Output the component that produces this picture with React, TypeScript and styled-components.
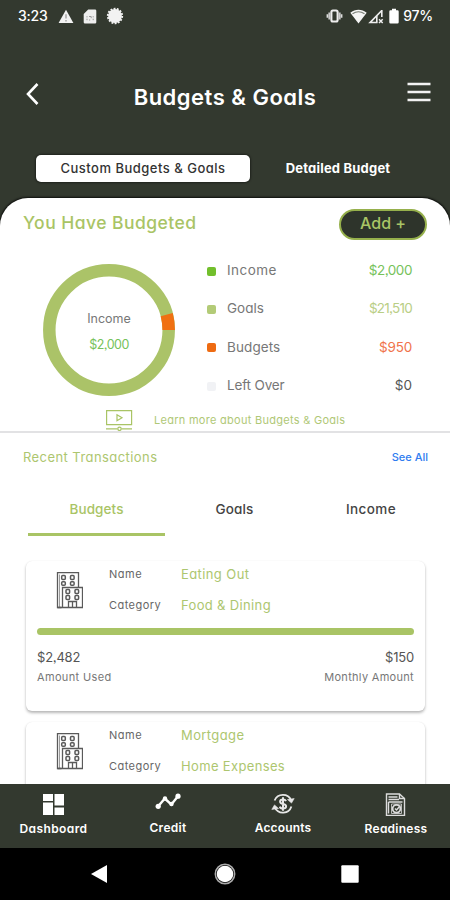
import React from "react";
import styled, { createGlobalStyle } from "styled-components";

const olive = "#33392f";
const green = "#a9c465";

const GlobalStyle = createGlobalStyle`
  * { box-sizing: border-box; }
  body {
    margin: 0;
    font-family: Inter, "Open Sans", sans-serif;
    font-feature-settings: "cv11", "ss03";
    background: #fff;
  }
  button { font: inherit; font-feature-settings: inherit; }
`;

const Screen = styled.div`
  width: 450px;
  height: 900px;
  display: flex;
  flex-direction: column;
  overflow: hidden;
  background: ${olive};
`;

const Text = styled.span<{
  $size: number;
  $color?: string;
  $weight?: number;
  $spacing?: number;
}>`
  font-size: ${(p) => p.$size}px;
  color: ${(p) => p.$color ?? "#666"};
  font-weight: ${(p) => p.$weight ?? 400};
  letter-spacing: ${(p) => p.$spacing ?? 0}px;
  line-height: 20px;
  white-space: nowrap;
`;

const StatusBar = styled.div`
  height: 32px;
  flex: none;
  display: flex;
  align-items: center;
  justify-content: space-between;
  padding: 0 17px 0 18px;
`;

const StatusGroup = styled.div<{ $gap: number }>`
  display: flex;
  align-items: center;
  gap: ${(p) => p.$gap}px;
`;

const TitleBar = styled.header`
  height: 123px;
  flex: none;
  display: grid;
  grid-template-columns: 40px 1fr 40px;
  align-items: center;
  padding: 0 19px 0 12px;
`;

const IconButton = styled.button<{ $end?: boolean }>`
  display: flex;
  justify-content: ${(p) => (p.$end ? "flex-end" : "center")};
  padding: 0;
  margin-top: ${(p) => (p.$end ? "-4px" : "0")};
  border: 0;
  background: none;
`;

const Title = styled.h1`
  margin: 7px 0 0;
  padding-left: 7px;
  text-align: center;
  font-size: 22px;
  line-height: 26px;
  font-weight: 600;
  letter-spacing: 0.5px;
  color: #fff;
  white-space: nowrap;
`;

const SegmentBar = styled.nav`
  flex: none;
  height: 43px;
  display: grid;
  grid-template-columns: 214px 176px;
  padding-left: 36px;
`;

const Segment = styled.button<{ $active?: boolean }>`
  height: 27px;
  padding: 0 0 2px;
  display: flex;
  align-items: center;
  justify-content: center;
  border: 0;
  border-radius: 5px;
  background: ${(p) => (p.$active ? "#fff" : "transparent")};
  box-shadow: ${(p) => (p.$active ? "0 0 2px 1px rgba(0, 0, 0, 0.4)" : "none")};
`;

const Panel = styled.main`
  flex: none;
  height: 586px;
  overflow: hidden;
  display: flex;
  flex-direction: column;
  background: #fff;
  border-radius: 28px 28px 0 0;
  box-shadow: 0 0 2px 1px rgba(0, 0, 0, 0.75);
`;

const Summary = styled.section`
  flex: none;
  height: 235px;
  border-bottom: 2px solid #e2e2e4;
`;

const SummaryHeader = styled.div`
  height: 54px;
  display: flex;
  align-items: center;
  justify-content: space-between;
  padding: 0 23px;
`;

const SummaryTitle = styled.div`
  padding-bottom: 4px;
`;

const AddButton = styled.button`
  width: 88px;
  height: 31px;
  margin-top: -1px;
  padding: 0 0 3px;
  display: flex;
  align-items: center;
  justify-content: center;
  border: 2px solid #96b04c;
  border-radius: 16px;
  background: #2e342b;
`;

const SummaryBody = styled.div`
  height: 156px;
  display: grid;
  grid-template-columns: 132px 205px;
  column-gap: 32px;
  padding-left: 43px;
`;

const Donut = styled.div`
  display: grid;
  width: 132px;
  height: 132px;
  margin-top: 12px;
  > * {
    grid-area: 1 / 1;
  }
`;

const DonutLabel = styled.div`
  display: flex;
  flex-direction: column;
  align-items: center;
  justify-content: center;
  gap: 6px;
  padding-top: 3px;
`;

const Legend = styled.ul`
  list-style: none;
  margin: -1px 0 0;
  padding: 0;
  display: grid;
  grid-template-rows: repeat(4, 38.3px);
`;

const LegendItem = styled.li`
  display: grid;
  grid-template-columns: 9px 1fr auto;
  column-gap: 11px;
  align-items: center;
`;

const Swatch = styled.i<{ $color: string }>`
  width: 9px;
  height: 9px;
  margin-top: 2px;
  border-radius: 2px;
  background: ${(p) => p.$color};
`;

const LearnMore = styled.div`
  height: 23px;
  display: flex;
  align-items: center;
  gap: 21px;
  padding-left: 105px;
`;

const RecentHeader = styled.div`
  flex: none;
  height: 49px;
  display: flex;
  align-items: center;
  justify-content: space-between;
  padding: 0 22px 1px 23px;
`;

const Tabs = styled.nav`
  flex: none;
  height: 54px;
  margin: 0 10px 0 28px;
  display: grid;
  grid-template-columns: 137px 139px 134px;
`;

const Tab = styled.button<{ $active?: boolean }>`
  padding: 2px 0 0;
  display: flex;
  align-items: center;
  justify-content: center;
  border: 0;
  border-bottom: 3px solid ${(p) => (p.$active ? green : "transparent")};
  background: none;
`;

const CardList = styled.div`
  padding: 25px 25px 0 26px;
  display: flex;
  flex-direction: column;
  gap: 11px;
`;

const Card = styled.article`
  flex: none;
  height: 150px;
  padding: 0 11px;
  border-radius: 6px;
  background: #fff;
  box-shadow: 0 2px 3px rgba(0, 0, 0, 0.28), 0 0 1px rgba(0, 0, 0, 0.1);
`;

const CardTop = styled.div`
  height: 67px;
  display: grid;
  grid-template-columns: 56px 72px 1fr;
  padding: 0 0 0 16px;
`;

const CardIcon = styled.div`
  padding-top: 10px;
  line-height: 0;
`;

const Column = styled.div<{ $end?: boolean; $gap: number; $top: number }>`
  display: flex;
  flex-direction: column;
  align-items: ${(p) => (p.$end ? "flex-end" : "flex-start")};
  gap: ${(p) => p.$gap}px;
  padding-top: ${(p) => p.$top}px;
`;

const Progress = styled.div`
  height: 7px;
  border-radius: 4px;
  background: ${green};
`;

const Amounts = styled.div`
  display: flex;
  justify-content: space-between;
`;

const BottomNav = styled.nav`
  flex: none;
  height: 64px;
  display: grid;
  grid-template-columns: 107px 122px 108px 118px;
  background: ${olive};
`;

const NavItem = styled.a<{ $lift?: number }>`
  display: flex;
  flex-direction: column;
  align-items: center;
  justify-content: space-between;
  padding: 8px 0 ${(p) => 9 + (p.$lift ?? 0)}px;
`;

const SystemNav = styled.div`
  flex: none;
  height: 52px;
  display: grid;
  grid-template-columns: 162px 90px 160px;
  padding-left: 18px;
  align-items: center;
  justify-items: center;
  background: #000;
`;

const WarningIcon = () => (
  <svg width="16" height="15" viewBox="0 0 16 15">
    <path d="M8 .8 15.4 14H.6Z" fill="#f2f2f2" />
    <path d="M8 5.3v4.2M8 11v1.6" stroke="#999" strokeWidth="1.3" />
  </svg>
);

const SimIcon = () => (
  <svg width="14" height="15" viewBox="0 0 14 15">
    <path d="M5.2.5H12a1.3 1.3 0 0 1 1.3 1.3v11.4a1.3 1.3 0 0 1-1.3 1.3H2a1.3 1.3 0 0 1-1.3-1.3V5Z" fill="#eee" />
    <path d="M4 7.2v1.2m0 1.3v1.5M10.2 7.2v1.2m0 1.3v1.5M6 7.5h2.2v1.7M6 11h1.2" stroke="#999" strokeWidth="1" fill="none" />
  </svg>
);

const BurstIcon = () => (
  <svg width="18" height="18" viewBox="0 0 18 18">
    <circle cx="9" cy="9" r="6.9" fill="#f2f2f2" />
    <circle cx="9" cy="9" r="7.2" fill="none" stroke="#f2f2f2" strokeWidth="1.9" strokeDasharray="1.9 1.33" />
  </svg>
);

const VibrateIcon = () => (
  <svg width="17" height="14" viewBox="0 0 18 14">
    <rect x="5.7" y="1.2" width="6.6" height="11.6" rx="1.6" fill="none" stroke="#eee" strokeWidth="2.2" />
    <path d="M3.6 3.2v7.6M14.4 3.2v7.6" stroke="#ccc" strokeWidth="2.2" />
    <path d="M1.5 5.2v3.6M16.5 5.2v3.6" stroke="#ddd" strokeWidth="1.8" />
  </svg>
);

const WifiIcon = () => (
  <svg width="17" height="15" viewBox="0 0 17 15">
    <path d="M.3 3.8C5-.2 12-.2 16.7 3.8L8.5 14.5Z" fill="#f5f5f5" />
    <path d="M2.5 4.8c3.6-2.4 8.4-2.4 12 0" fill="none" stroke="#777c73" strokeWidth="1.1" />
  </svg>
);

const SignalIcon = () => (
  <svg width="16" height="15" viewBox="0 0 16 15">
    <path d="M13.8 1.5 2.2 13.5H9.5" fill="none" stroke="#eee" strokeWidth="1.7" />
    <path d="M13.8 1v7M8.8 7v6.5" stroke="#eee" strokeWidth="1.6" />
    <path d="m11 10.3 3.7 3.7m0-3.7L11 14" stroke="#eee" strokeWidth="1.5" />
  </svg>
);

const BatteryIcon = () => (
  <svg width="10" height="16" viewBox="0 0 10 16">
    <path d="M3 .7h4v1.5h1.5a1.2 1.2 0 0 1 1.2 1.2v10.9a1.2 1.2 0 0 1-1.2 1.2h-7A1.2 1.2 0 0 1 .3 14.3V3.4a1.2 1.2 0 0 1 1.2-1.2H3Z" fill="#fff" />
  </svg>
);

const VideoIcon = () => (
  <svg width="28" height="23" viewBox="0 0 28 23" fill="none" stroke={green} strokeWidth="1.2">
    <path d="M1.6 2.6h25v14h-25ZM12 6.7l5 3-5 3ZM1 20.8h11.5M16.5 20.8H27" />
    <circle cx="14.5" cy="20.8" r="1.7" />
  </svg>
);

const BuildingIcon = () => (
  <svg width="30" height="38" viewBox="0 0 30 38" fill="none" stroke="#5a5a5a" strokeWidth="1.3">
    <path d="M8.500 36.5H4.5V1.7H25.5V16" />
    <path d="M6.5 36.5V3.5" strokeWidth=".6" />
    <path d="M9.5 36.5V16.5h20v20ZM15.5 36.5v-6h8v6M19.5 30.5v6M4.5 36.5h25" />
    <g strokeWidth="1.5">
      <rect x="8.700" y="4.5" width="3.6" height="4" rx="1" />
      <rect x="17.5" y="4.5" width="3.6" height="4" rx="1" />
      <rect x="8.700" y="10.8" width="3.6" height="3.5" rx="1" />
      <rect x="17.5" y="10.8" width="3.6" height="3.5" rx="1" />
      <rect x="13" y="18.5" width="3.6" height="4" rx="1" />
      <rect x="22" y="18.5" width="3.6" height="4" rx="1" />
      <rect x="13" y="24.5" width="3.6" height="4" rx="1" />
      <rect x="22" y="24.5" width="3.6" height="4" rx="1" />
    </g>
  </svg>
);

const DashboardIcon = () => (
  <svg width="24" height="24" viewBox="0 0 24 24" fill="#fff">
    <path d="M1 2h10v7H1ZM12.5 2H22v11.5h-9.5ZM1 10.5h10V23H1ZM12.5 15.5H22V23h-9.5Z" />
  </svg>
);

const CreditIcon = () => (
  <svg width="26" height="20" viewBox="0 0 26 20" fill="#fff">
    <path d="M3 14.5 9.8 6.5l6.5 6L23.2 4" fill="none" stroke="#fff" strokeWidth="2.4" />
    <circle cx="3.2" cy="14.3" r="2.6" />
    <circle cx="10" cy="6.5" r="2.2" />
    <circle cx="16.5" cy="12" r="2.2" />
    <circle cx="23" cy="4.2" r="2.6" />
  </svg>
);

const AccountsIcon = () => (
  <svg width="24" height="24" viewBox="0 0 24 24" fill="none" stroke="#e8e8e8" strokeWidth="1.8">
    <path d="M3.6 8.5A9 9 0 0 1 20.2 8.3M20.4 14.5A9 9 0 0 1 3.8 15.7" />
    <path d="m16.5 7.5 4 3.6L23.2 6.6ZM7.5 16.5l-4-3.6-2.7 4.5Z" fill="#e8e8e8" strokeWidth=".6" />
    <path d="M15 9.2c-.6-1.3-1.7-1.700-3-1.700-1.700 0-2.900.9-2.900 2.200 0 3.100 6 1.500 6 4.600 0 1.400-1.300 2.300-3.100 2.300-1.600 0-2.800-.7-3.200-2M12 5.300v13.400" strokeWidth="2" />
  </svg>
);

const ReadinessIcon = () => (
  <svg width="22" height="24" viewBox="0 0 22 24" fill="none" stroke="#dcdcdc" strokeWidth="1.400">
    <path d="M1.500 2h13l5 4.500v17h-18Z" />
    <path d="M14.500 2v4.500h5M3.500 5h9M3.500 7.500H14M3.500 10h14M3.500 10v11.500" />
    <path d="M6.500 12h10v9.500h-10Z" strokeWidth=".8" />
    <circle cx="11.500" cy="16.800" r="3.900" strokeWidth="1.800" />
    <path d="m10 16.500 1.500 1.500 4-4.500" strokeWidth="1.500" />
  </svg>
);

type LegendEntry = {
  name: string;
  value: string;
  swatch: string;
  color: string;
  nameSpacing: number;
  valueSpacing: number;
};

const legend: LegendEntry[] = [
  { name: "Income", value: "$2,000", swatch: "#72bf2c", color: "#76c25a", nameSpacing: 0.45, valueSpacing: -0.45 },
  { name: "Goals", value: "$21,510", swatch: "#b3cb77", color: "#b9ce85", nameSpacing: 0, valueSpacing: -0.75 },
  { name: "Budgets", value: "$950", swatch: "#ee6b12", color: "#f0734a", nameSpacing: 0.1, valueSpacing: -0.2 },
  { name: "Left Over", value: "$0", swatch: "#f1f2f5", color: "#555", nameSpacing: -0.15, valueSpacing: 0 },
];

type Transaction = {
  name: string;
  category: string;
  amounts?: { used: string; monthly: string };
};

const transactions: Transaction[] = [
  { name: "Eating Out", category: "Food & Dining", amounts: { used: "$2,482", monthly: "$150" } },
  { name: "Mortgage", category: "Home Expenses" },
];

export default function App() {
  return (
    <>
      <GlobalStyle />
      <Screen>
        <StatusBar>
          <StatusGroup $gap={10}>
            <Text $size={14} $color="#fff" $weight={500} $spacing={-0.2}>3:23</Text>
            <StatusGroup $gap={9}>
              <WarningIcon />
              <SimIcon />
              <BurstIcon />
            </StatusGroup>
          </StatusGroup>
          <StatusGroup $gap={4.5}>
            <StatusGroup $gap={7}>
              <VibrateIcon />
              <StatusGroup $gap={1}>
                <WifiIcon />
                <SignalIcon />
              </StatusGroup>
            </StatusGroup>
            <BatteryIcon />
            <Text $size={14} $color="#fff" $weight={500} $spacing={-0.2}>97%</Text>
          </StatusGroup>
        </StatusBar>

        <TitleBar>
          <IconButton aria-label="Back">
            <svg width="14" height="24" viewBox="0 0 14 24">
              <path d="M12.5 2 3 12l9.5 10" fill="none" stroke="#fff" strokeWidth="2.6" />
            </svg>
          </IconButton>
          <Title>Budgets &amp; Goals</Title>
          <IconButton $end aria-label="Menu">
            <svg width="24" height="20" viewBox="0 0 24 20">
              <path d="M.5 2h23M.5 10h23M.5 18h23" stroke="#f2f2f2" strokeWidth="2.4" />
            </svg>
          </IconButton>
        </TitleBar>

        <SegmentBar>
          <Segment $active>
            <Text $size={13} $color="#333" $weight={500} $spacing={0.5}>Custom Budgets &amp; Goals</Text>
          </Segment>
          <Segment>
            <Text $size={13} $color="#fff" $weight={700} $spacing={0.2}>Detailed Budget</Text>
          </Segment>
        </SegmentBar>

        <Panel>
          <Summary>
            <SummaryHeader>
              <SummaryTitle>
                <Text $size={17.5} $color={green} $weight={500} $spacing={0.45}>You Have Budgeted</Text>
              </SummaryTitle>
              <AddButton>
                <Text $size={16} $color="#a9c465" $weight={500}>Add +</Text>
              </AddButton>
            </SummaryHeader>
            <SummaryBody>
              <Donut>
                <svg width="132" height="132" viewBox="0 0 132 132" fill="none" strokeWidth="12.5">
                  <circle cx="66" cy="66" r="59.7" stroke="#abc368" />
                  <path d="M125.7 66A59.7 59.7 0 0 0 123.7 50.6" stroke="#f07012" />
                </svg>
                <DonutLabel>
                  <Text $size={12.5} $color="#777">Income</Text>
                  <Text $size={12.5} $color="#76c25a" $spacing={-0.5}>$2,000</Text>
                </DonutLabel>
              </Donut>
              <Legend>
                {legend.map((l) => (
                  <LegendItem key={l.name}>
                    <Swatch $color={l.swatch} />
                    <Text $size={13.5} $color="#777" $spacing={l.nameSpacing}>{l.name}</Text>
                    <Text $size={13.5} $color={l.color} $spacing={l.valueSpacing}>{l.value}</Text>
                  </LegendItem>
                ))}
              </Legend>
            </SummaryBody>
            <LearnMore>
              <VideoIcon />
              <Text $size={11} $color="#b0c876" $spacing={0.28}>Learn more about Budgets &amp; Goals</Text>
            </LearnMore>
          </Summary>

          <RecentHeader>
            <Text $size={13} $color="#adc66f" $spacing={0.43}>Recent Transactions</Text>
            <Text $size={11} $color="#2f7cf0" $weight={500}>See All</Text>
          </RecentHeader>
          <Tabs>
            <Tab $active>
              <Text $size={13.5} $color="#a9c465" $weight={500} $spacing={0.1}>Budgets</Text>
            </Tab>
            <Tab>
              <Text $size={13.5} $color="#444" $weight={500} $spacing={0.1}>Goals</Text>
            </Tab>
            <Tab>
              <Text $size={13.5} $color="#444" $weight={500} $spacing={0.4}>Income</Text>
            </Tab>
          </Tabs>

          <CardList>
            {transactions.map((t) => (
              <Card key={t.name}>
                <CardTop>
                  <CardIcon>
                    <BuildingIcon />
                  </CardIcon>
                  <Column $gap={11} $top={3}>
                    <Text $size={11} $spacing={0.5}>Name</Text>
                    <Text $size={11} $spacing={0.45}>Category</Text>
                  </Column>
                  <Column $gap={11} $top={3}>
                    <Text $size={13} $color="#adc66f" $spacing={0.4}>{t.name}</Text>
                    <Text $size={13} $color="#adc66f" $spacing={0.35}>{t.category}</Text>
                  </Column>
                </CardTop>
                {t.amounts && (
                  <>
                    <Progress />
                    <Amounts>
                      <Column $gap={0} $top={12}>
                        <Text $size={13} $color="#555" $spacing={-0.2}>{t.amounts.used}</Text>
                        <Text $size={11} $color="#777" $spacing={0.35}>Amount Used</Text>
                      </Column>
                      <Column $gap={0} $top={12} $end>
                        <Text $size={13} $color="#555" $spacing={-0.2}>{t.amounts.monthly}</Text>
                        <Text $size={11} $color="#777" $spacing={0.3}>Monthly Amount</Text>
                      </Column>
                    </Amounts>
                  </>
                )}
              </Card>
            ))}
          </CardList>
        </Panel>

        <BottomNav>
          <NavItem>
            <DashboardIcon />
            <Text $size={12} $color="#fff" $weight={600} $spacing={0.4}>Dashboard</Text>
          </NavItem>
          <NavItem $lift={1}>
            <CreditIcon />
            <Text $size={12} $color="#fff" $weight={600} $spacing={0.3}>Credit</Text>
          </NavItem>
          <NavItem $lift={1}>
            <AccountsIcon />
            <Text $size={12} $color="#fff" $weight={600} $spacing={0.15}>Accounts</Text>
          </NavItem>
          <NavItem>
            <ReadinessIcon />
            <Text $size={12} $color="#fff" $weight={600} $spacing={0.25}>Readiness</Text>
          </NavItem>
        </BottomNav>

        <SystemNav>
          <svg width="18" height="20" viewBox="0 0 18 20">
            <path d="M17 1v18L1 10Z" fill="#fff" />
          </svg>
          <svg width="22" height="22" viewBox="0 0 22 22">
            <circle cx="11" cy="11" r="9.7" fill="none" stroke="#aaa" strokeWidth="1.5" />
            <circle cx="11" cy="11" r="8.3" fill="#fff" />
          </svg>
          <svg width="18" height="18" viewBox="0 0 18 18">
            <rect x=".3" y=".3" width="17.4" height="17.4" rx="1" fill="#fff" />
          </svg>
        </SystemNav>
      </Screen>
    </>
  );
}
